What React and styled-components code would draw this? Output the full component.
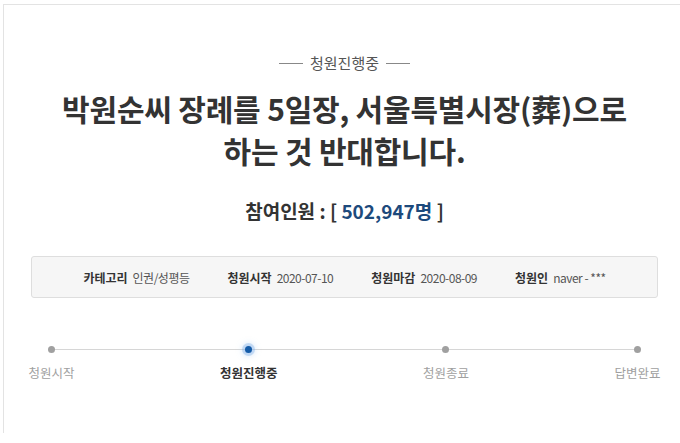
import { styled, createGlobalStyle } from "styled-components";

const GlobalStyle = createGlobalStyle`
html,body{margin:0;padding:0;background:#fff;overflow:hidden;}
body{font-family:"Noto Sans CJK KR","Noto Sans",sans-serif;color:#333;}
`;

const steps = [
  { label: "청원시작" },
  { label: "청원진행중", active: true },
  { label: "청원종료" },
  { label: "답변완료" },
];

const info = [
  { key: "카테고리", value: "인권/성평등" },
  { key: "청원시작", value: "2020-07-10" },
  { key: "청원마감", value: "2020-08-09" },
  { key: "청원인", value: "naver - ***" },
];

function App() {
  return (
    <>
      <GlobalStyle />
      <Card>
        <Status>
          <Dash />
          <span>청원진행중</span>
          <Dash />
        </Status>
        <Title>
          박원순씨 장례를 5일장, 서울특별시장(葬)으로
          <br />
          하는 것 반대합니다.
        </Title>
        <Count>
          참여인원 : [ <Num>502,947명</Num> ]
        </Count>
        <InfoBar>
          {info.map((i) => (
            <InfoItem key={i.key}>
              <InfoKey>{i.key}</InfoKey>
              <InfoValue>{i.value}</InfoValue>
            </InfoItem>
          ))}
        </InfoBar>
        <Track>
          {steps.map((s) => (
            <Step key={s.label}>
              <Dot $active={s.active} />
              <StepLabel $active={s.active}>{s.label}</StepLabel>
            </Step>
          ))}
        </Track>
      </Card>
    </>
  );
}

const Card = styled.div`
margin:4px 0 0 3px;
width:682px;
height:429px;
box-sizing:border-box;
border-left:1px solid #e3e3e3;
border-top:1px solid #e3e3e3;
display:flex;
flex-direction:column;
align-items:center;
padding-top:48px;
`;

const Status = styled.div`
display:flex;
align-items:center;
gap:7px;
font-size:15px;
line-height:20px;
color:#555;
`;

const Dash = styled.i`
display:block;
width:24px;
height:1px;
background:#888;
`;

const Title = styled.h1`
margin:14px 0 0;
font-size:30px;
line-height:42px;
font-weight:700;
text-align:center;
color:#333;
letter-spacing:-0.2px;
`;

const Count = styled.div`
margin-top:27px;
font-size:19px;
line-height:26px;
font-weight:700;
color:#333;
`;

const Num = styled.span`
color:#1d4a7c;
`;

const InfoBar = styled.div`
margin-top:32px;
width:627px;
height:42px;
box-sizing:border-box;
background:#f6f6f6;
border:1px solid #dedede;
border-radius:3px;
display:flex;
justify-content:center;
align-items:center;
gap:38px;
font-size:12px;
`;

const InfoItem = styled.div`
display:flex;
gap:5px;
align-items:baseline;
`;

const InfoKey = styled.b`
font-weight:700;
color:#333;
`;

const InfoValue = styled.span`
color:#555;
letter-spacing:-0.5px;
`;

const Track = styled.div`
position:relative;
margin-top:45px;
width:632px;
display:flex;
justify-content:space-between;
&::before{
  content:"";
  position:absolute;
  top:6px;
  left:21px;
  right:21px;
  height:1px;
  background:#d6d6d6;
}
`;

const Step = styled.div`
position:relative;
display:flex;
flex-direction:column;
align-items:center;
gap:12px;
`;

const Dot = styled.span`
display:block;
width:7px;
height:7px;
margin-top:3px;
border-radius:50%;
background:${(p) => (p.$active ? "#145ba8" : "#a0a0a0")};
box-shadow:${(p) => (p.$active ? "0 0 0 3px rgba(120,170,230,0.35), 0 0 6px 3px rgba(140,190,240,0.35)" : "none")};
`;

const StepLabel = styled.span`
font-size:12.5px;
line-height:16px;
color:${(p) => (p.$active ? "#333" : "#a0a0a0")};
font-weight:${(p) => (p.$active ? 700 : 400)};
`;

export default App;
